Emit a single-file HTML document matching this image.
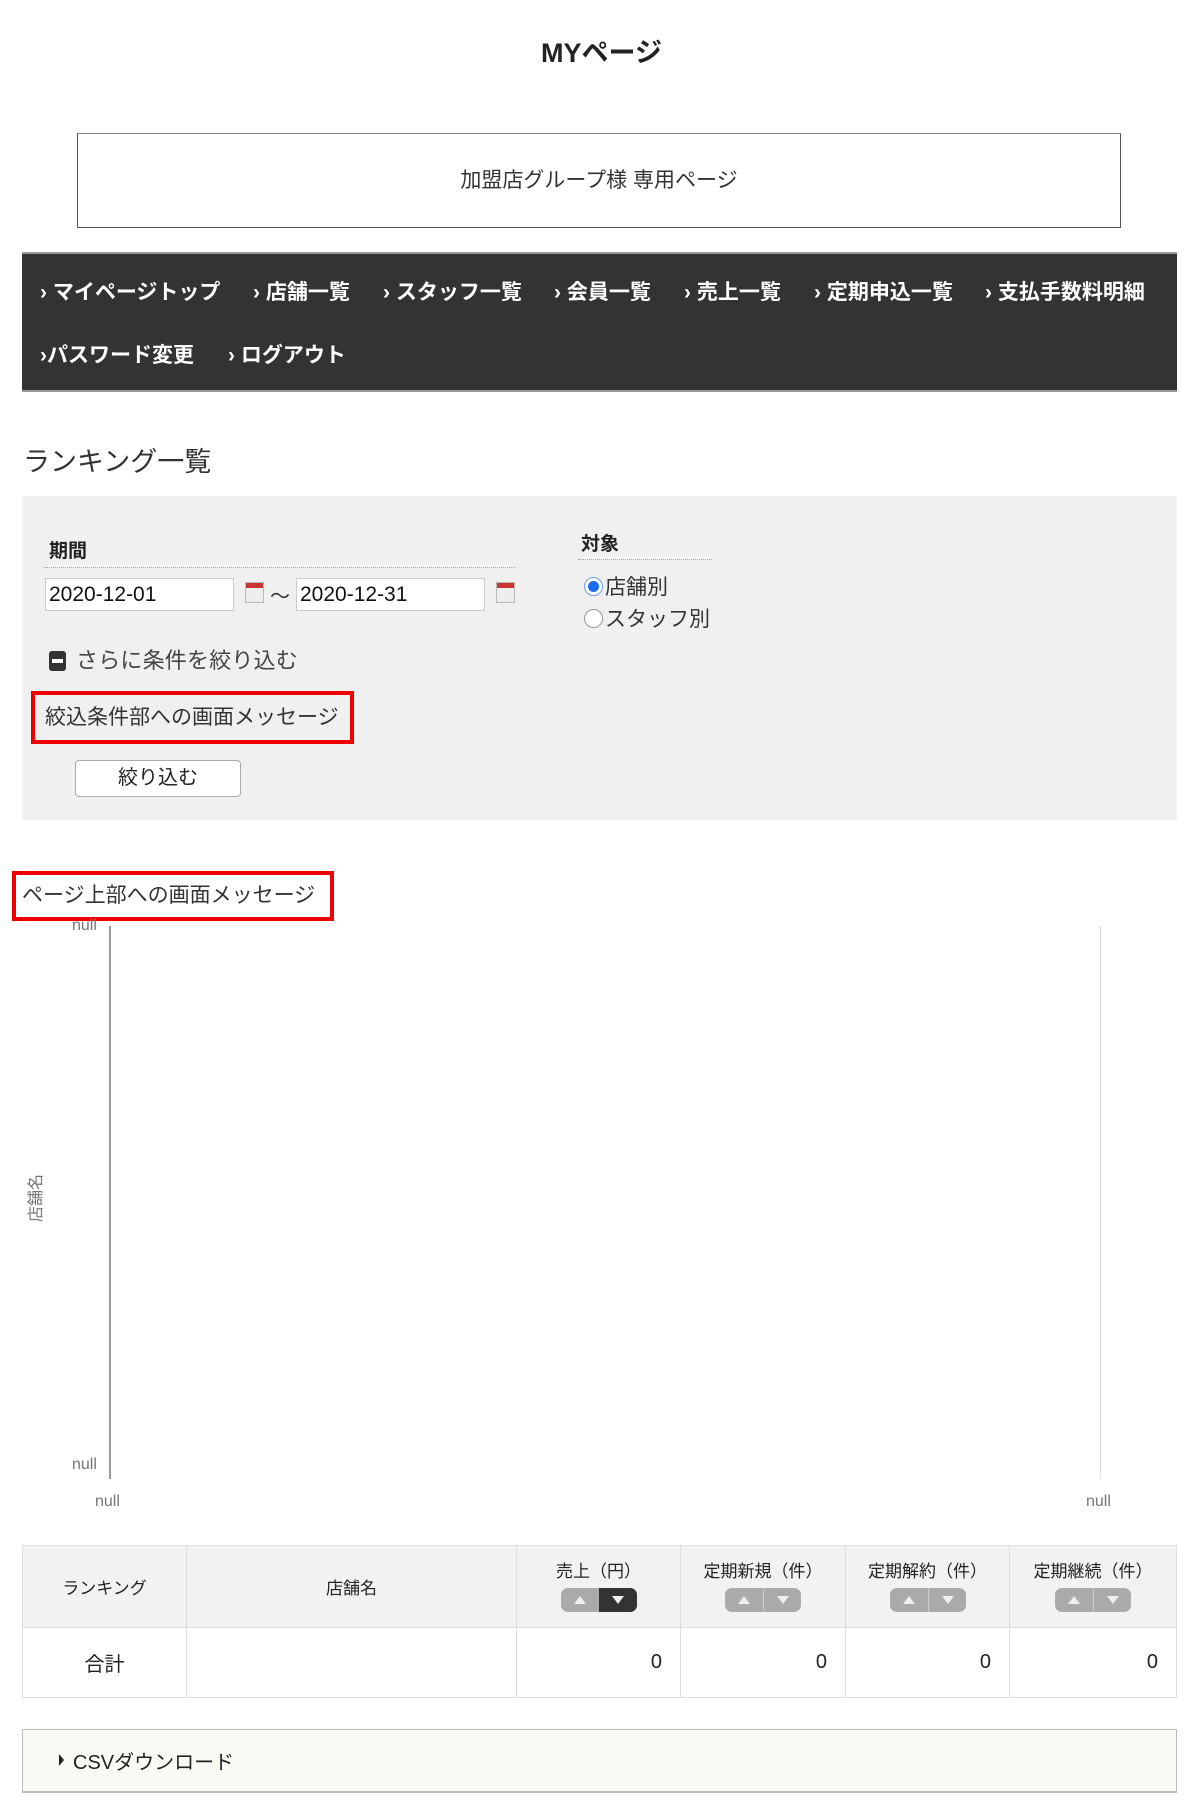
<!DOCTYPE html>
<html><head><meta charset="utf-8">
<style>
*{box-sizing:border-box;margin:0;padding:0}
body{width:1203px;height:1812px;background:#fff;font-family:"Liberation Sans","Noto Sans CJK JP",sans-serif;color:#333;position:relative;overflow:hidden}
.a{position:absolute}
h1{position:absolute;left:0;width:1203px;top:31px;text-align:center;font-size:27px;font-weight:bold;color:#222}
.box{left:77px;top:133px;width:1044px;height:95px;border:1px solid #555;border-top-color:#888;text-align:center;line-height:93px;font-size:21px;color:#333}
.nav{left:22px;top:252px;width:1155px;height:140px;background:#333;border-top:2px solid #999;border-bottom:2px solid #999;color:#fff;font-size:21px;font-weight:bold}
.nav span{position:absolute;white-space:nowrap}
.h2{left:23px;top:440px;font-size:27px;color:#333}
.panel{left:22px;top:496px;width:1155px;height:324px;background:#f0f0f0}
.lbl{font-weight:bold;font-size:19px;color:#222}
.dot{border-top:1px dotted #aaa;height:0}
.inp{background:#fff;border:1px solid #ccc;height:33px;font-size:21px;line-height:31px;padding-left:3px;color:#111}
.cal{width:19px;height:21px;background:linear-gradient(#c33 0 5px,#eee 5px);border:1px solid #bbb}
.red{border:4px solid #e00;font-size:21px;color:#333;white-space:nowrap}
.btn{left:75px;top:760px;width:166px;height:37px;background:#fff;border:1px solid #aaa;border-radius:4px;text-align:center;line-height:35px;font-size:20px;color:#222}
.null{font-size:16px;color:#777}
table{position:absolute;left:22px;top:1545px;width:1155px;border-collapse:collapse;font-size:17px;color:#222}
td,th{border:1px solid #ddd;font-weight:normal}
th{background:#f2f2f2;height:82px;vertical-align:middle}
td{height:70px;font-size:20px}
.sb{display:inline-block;margin-top:6px;width:76px;height:24px;border-radius:7px;overflow:hidden;background:#aaa}
.sb i{float:left;width:37px;height:24px;position:relative}
.sb i+i{float:right;width:38px}
.sb i:after{content:"";position:absolute;left:13px;top:8px;border-left:6px solid transparent;border-right:6px solid transparent}
.up:after{border-bottom:8px solid #eee}
.dn:after{border-top:8px solid #eee}
.csv{left:22px;top:1729px;width:1155px;height:64px;background:#fafaf5;border:1px solid #bbb;border-bottom-width:2px;font-size:20px;color:#222}
</style></head><body>
<h1>MYページ</h1>
<div class="a box">加盟店グループ様 専用ページ</div>
<div class="a nav">
<span style="left:18px;top:22px">› マイページトップ</span>
<span style="left:231px;top:22px">› 店舗一覧</span>
<span style="left:361px;top:22px">› スタッフ一覧</span>
<span style="left:532px;top:22px">› 会員一覧</span>
<span style="left:662px;top:22px">› 売上一覧</span>
<span style="left:792px;top:22px">› 定期申込一覧</span>
<span style="left:963px;top:22px">› 支払手数料明細</span>
<span style="left:18px;top:85px">›パスワード変更</span>
<span style="left:206px;top:85px">› ログアウト</span>
</div>
<div class="a h2">ランキング一覧</div>
<div class="a panel"></div>
<div class="a lbl" style="left:49px;top:536px">期間</div>
<div class="a dot" style="left:44px;top:567px;width:472px"></div>
<div class="a inp" style="left:45px;top:578px;width:189px">2020-12-01</div>
<div class="a cal" style="left:245px;top:582px"></div>
<div class="a" style="left:270px;top:580px;font-size:20px">～</div>
<div class="a inp" style="left:296px;top:578px;width:189px">2020-12-31</div>
<div class="a cal" style="left:496px;top:582px"></div>
<div class="a lbl" style="left:581px;top:529px">対象</div>
<div class="a dot" style="left:578px;top:559px;width:134px"></div>
<div class="a" style="left:584px;top:577px;width:19px;height:19px;border-radius:50%;border:1px solid #6a9cf0;background:#fff"><div style="margin:3px;width:11px;height:11px;border-radius:50%;background:#1a6cf0"></div></div>
<div class="a" style="left:605px;top:571px;font-size:21px;color:#333">店舗別</div>
<div class="a" style="left:584px;top:609px;width:19px;height:19px;border-radius:50%;border:1px solid #999;background:#fff"></div>
<div class="a" style="left:605px;top:603px;font-size:21px;color:#333">スタッフ別</div>
<div class="a" style="left:49px;top:651px;width:17px;height:20px;background:#333;border-radius:3px"><div style="margin:8px 3px;height:4px;background:#fff"></div></div>
<div class="a" style="left:76px;top:643px;font-size:22px;color:#444;letter-spacing:0.2px">さらに条件を絞り込む</div>
<div class="a red" style="left:31px;top:691px;width:323px;height:53px;line-height:45px;padding-left:10px">絞込条件部への画面メッセージ</div>
<div class="a btn">絞り込む</div>
<div class="a red" style="left:12px;top:871px;width:322px;height:50px;line-height:42px;padding-left:6px">ページ上部への画面メッセージ</div>
<div class="a null" style="left:72px;top:917px">null</div>
<div class="a" style="left:109px;top:926px;width:2px;height:553px;background:#999"></div>
<div class="a" style="left:1100px;top:926px;width:1px;height:553px;background:#ddd"></div>
<div class="a null" style="left:72px;top:1456px">null</div>
<div class="a null" style="left:95px;top:1493px">null</div>
<div class="a null" style="left:1086px;top:1493px">null</div>
<div class="a null" style="left:10px;top:1186px;transform:rotate(-90deg);transform-origin:center">店舗名</div>
<table>
<tr><th style="width:164px">ランキング</th><th style="width:330px">店舗名</th>
<th style="width:164px">売上（円）<br><span class="sb"><i class="up"></i><i class="dn" style="background:#333"></i></span></th>
<th style="width:165px">定期新規（件）<br><span class="sb"><i class="up"></i><i class="dn" style="border-left:1px solid #ccc"></i></span></th>
<th style="width:164px">定期解約（件）<br><span class="sb"><i class="up"></i><i class="dn" style="border-left:1px solid #ccc"></i></span></th>
<th>定期継続（件）<br><span class="sb"><i class="up"></i><i class="dn" style="border-left:1px solid #ccc"></i></span></th></tr>
<tr><td style="text-align:center">合計</td><td></td><td style="text-align:right;padding-right:18px">0</td><td style="text-align:right;padding-right:18px">0</td><td style="text-align:right;padding-right:18px">0</td><td style="text-align:right;padding-right:18px">0</td></tr>
</table>
<div class="a csv"><span class="a" style="left:36px;top:24px;border-left:5px solid #222;border-top:6px solid transparent;border-bottom:6px solid transparent"></span><span class="a" style="left:50px;top:16px">CSVダウンロード</span></div>
</body></html>
